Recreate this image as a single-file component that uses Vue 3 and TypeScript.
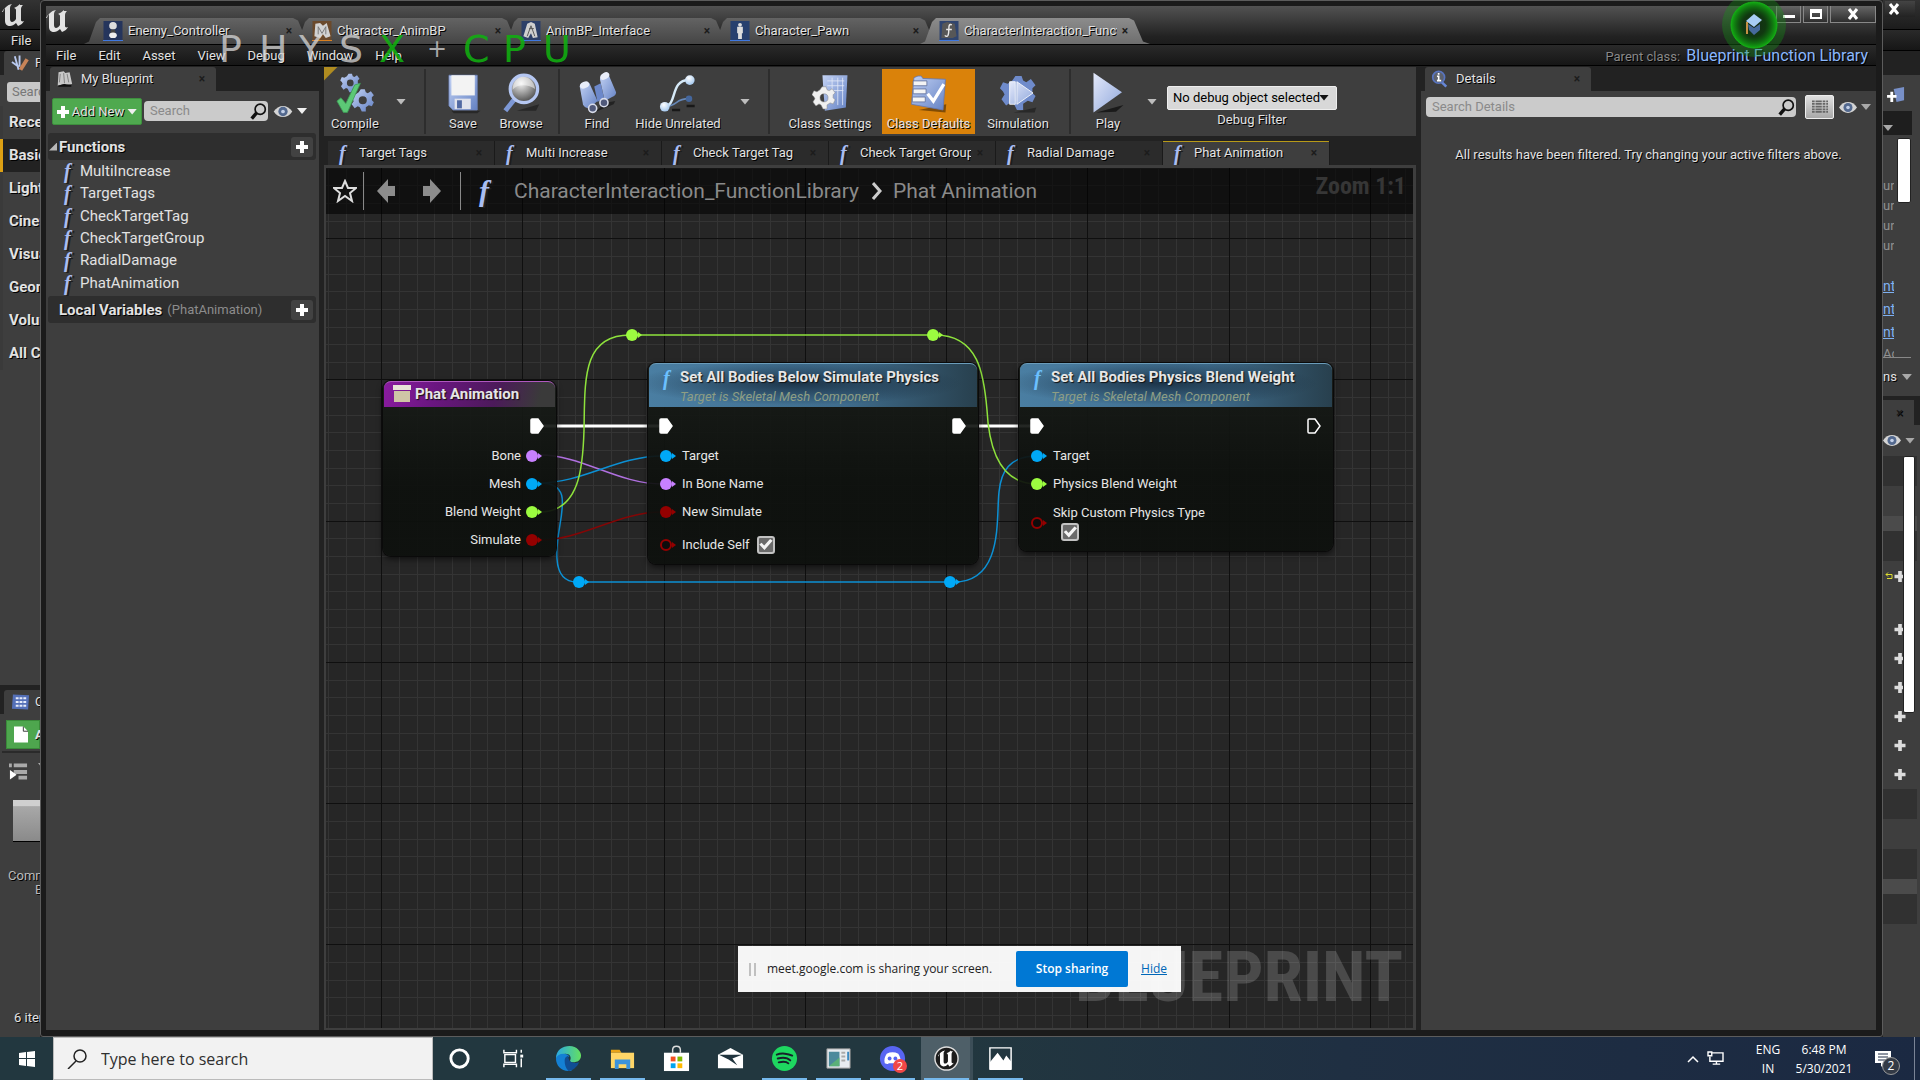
<script setup lang="ts">
import { ref } from 'vue'

interface Pin {
  label: string
  color: string
  hollow?: boolean
  check?: boolean
  stacked?: boolean
}
interface GraphNode {
  id: string
  title: string
  subtitle?: string
  kind: 'entry' | 'call'
  x: number
  y: number
  w: number
  h: number
  execIn: boolean
  execOut: 'linked' | 'open'
  pins: Pin[]
}

const docTabs = [
  { name: 'Enemy_Controller', icon: 'pawn', line: '#3f78e0' },
  { name: 'Character_AnimBP', icon: 'anim', line: '#d98020' },
  { name: 'AnimBP_Interface', icon: 'iface', line: '#3f78e0' },
  { name: 'Character_Pawn', icon: 'person', line: '#3f78e0' },
  { name: 'CharacterInteraction_FunctionLibrary', icon: 'lib', line: '#3f78e0' },
]
const menus = ['File', 'Edit', 'Asset', 'View', 'Debug', 'Window', 'Help']
const functions = ['MultiIncrease', 'TargetTags', 'CheckTargetTag', 'CheckTargetGroup', 'RadialDamage', 'PhatAnimation']
const graphTabs = ['Target Tags', 'Multi Increase', 'Check Target Tag', 'Check Target Group', 'Radial Damage', 'Phat Animation']
const categories = ['Recently Placed', 'Basic', 'Lights', 'Cinematic', 'Visual Effects', 'Geometry', 'Volumes', 'All Classes']
const physx = [...'PHYSX'].map((c, i) => ({ c, green: i === 4 }))

const purple = '#c880ff'
const blue = '#00a8f6'
const green = '#9cfc40'
const red = '#940000'

const nodes: GraphNode[] = [
  {
    id: 'entry', title: 'Phat Animation', kind: 'entry', x: 57, y: 213, w: 173, h: 175,
    execIn: false, execOut: 'linked',
    pins: [
      { label: 'Bone', color: purple },
      { label: 'Mesh', color: blue },
      { label: 'Blend Weight', color: green },
      { label: 'Simulate', color: red },
    ],
  },
  {
    id: 'simulate', title: 'Set All Bodies Below Simulate Physics', subtitle: 'Target is Skeletal Mesh Component',
    kind: 'call', x: 322, y: 195, w: 330, h: 201, execIn: true, execOut: 'linked',
    pins: [
      { label: 'Target', color: blue },
      { label: 'In Bone Name', color: purple },
      { label: 'New Simulate', color: red },
      { label: 'Include Self', color: red, hollow: true, check: true },
    ],
  },
  {
    id: 'blend', title: 'Set All Bodies Physics Blend Weight', subtitle: 'Target is Skeletal Mesh Component',
    kind: 'call', x: 693, y: 195, w: 314, h: 188, execIn: true, execOut: 'open',
    pins: [
      { label: 'Target', color: blue },
      { label: 'Physics Blend Weight', color: green },
      { label: 'Skip Custom Physics Type', color: red, hollow: true, check: true, stacked: true },
    ],
  },
]

const knots = [
  { x: 306, y: 167, color: green },
  { x: 607, y: 167, color: green },
  { x: 253, y: 414, color: blue },
  { x: 624, y: 414, color: blue },
]

const step = 17.656
const lines = (origin: number, count: number) =>
  Array.from({ length: count }, (_, i) => ({ at: Math.round(origin + i * step), major: i % 8 === 0 }))
const columns = lines(-86, 180)
const rows = lines(-71, 100)

const tasks = [
  { id: 'cortana', label: 'Cortana', open: false },
  { id: 'taskview', label: 'Task View', open: false },
  { id: 'edge', label: 'Microsoft Edge', open: true },
  { id: 'explorer', label: 'File Explorer', open: true },
  { id: 'store', label: 'Microsoft Store', open: false },
  { id: 'mail', label: 'Mail', open: false },
  { id: 'spotify', label: 'Spotify', open: true },
  { id: 'panel', label: 'Control Panel', open: true },
  { id: 'discord', label: 'Discord', open: true },
  { id: 'unreal', label: 'Unreal Editor', open: true },
  { id: 'photos', label: 'Photos', open: true },
]

const search = ref('')
const detailSearch = ref('')
const debugObject = ref('none')
</script>

<template>
  <svg class="defs" aria-hidden="true">
    <defs>
      <linearGradient id="gBlue" x1="0" y1="0" x2="1" y2="1">
        <stop offset="0" stop-color="#c3d2f4" />
        <stop offset="1" stop-color="#6482c4" />
      </linearGradient>
      <linearGradient id="gPlay" x1="0" y1="0" x2="1" y2="1">
        <stop offset="0" stop-color="#e4e9fa" />
        <stop offset="1" stop-color="#90a8dc" />
      </linearGradient>
      <radialGradient id="gLens" cx=".4" cy=".3" r=".7">
        <stop offset="0" stop-color="#f2f2f2" />
        <stop offset="1" stop-color="#4c4c4c" />
      </radialGradient>
      <radialGradient id="gBall" cx=".4" cy=".3" r=".7">
        <stop offset="0" stop-color="#ffffff" />
        <stop offset="1" stop-color="#a4c8ee" />
      </radialGradient>
      <radialGradient id="gRing">
        <stop offset="0" stop-color="#20a020" stop-opacity="0" />
        <stop offset=".5" stop-color="#0c700c" stop-opacity=".3" />
        <stop offset="1" stop-color="#12b412" stop-opacity=".95" />
      </radialGradient>
      <linearGradient id="gEdge" x1="0" y1="0" x2="1" y2="0">
        <stop offset="0" stop-color="#2aa8e4" />
        <stop offset="1" stop-color="#64e060" />
      </linearGradient>
    </defs>
    <symbol id="i-ue" viewBox="0 0 24 24">
      <path d="M1 9C2 5 5 2 10 1 8 3 8 4 8 6v10c0 2 1 3 2 3s3-1 4-3V7c0-1-1-2-2-2 2-1 4-2 6-4v1h3c-1 1-2 2-2 4v11c0 1 1 2 3 1-1 2-3 4-6 5l-2-3c-2 2-4 3-6 3-3 0-5-2-5-5V7c0-2-1-2-3 2z" fill="currentColor" />
    </symbol>
    <symbol id="i-gear" viewBox="0 0 24 24">
      <path fill-rule="evenodd" d="M10 1h4l1 3 2 1 3-2 3 4-2 2v3l2 2-2 4-3-1-3 2v4h-4l-2-4-2-1-3 2-3-4 2-3-1-2-2-2 2-4 3 1 3-2zM12 8a4 4 0 1 0 0 8 4 4 0 1 0 0-8z" />
    </symbol>
    <symbol id="i-mag" viewBox="0 0 20 20">
      <circle cx="12" cy="8" r="6" fill="none" stroke="#111" stroke-width="2" />
      <path d="M8 12l-6 7" stroke="#111" stroke-width="4" />
    </symbol>
    <symbol id="i-eye" viewBox="0 0 20 14">
      <path d="M0 7C5-1 15-1 20 7c-5 8-15 8-20 0z" fill="#d4d4d4" />
      <circle cx="10" cy="7" r="5" fill="#53698f" />
      <circle cx="10" cy="7" r="2" fill="#c3d0e8" />
    </symbol>
    <symbol id="i-exec" viewBox="0 0 14 16">
      <path d="M2 1h6l5 7-5 7H2c-1 0-1-1-1-1V2c0-1 1-1 1-1z" stroke="#fff" stroke-width="1.5" />
    </symbol>
    <symbol id="i-compile" viewBox="0 0 48 52">
      <use href="#i-gear" x="5" y="1" width="25" height="25" fill="url(#gBlue)" />
      <use href="#i-gear" x="18" y="19" width="30" height="32" fill="url(#gBlue)" />
      <path d="M1 36l5-4 6 7L23 16l7-2L14 50H9z" fill="#5cc876" stroke="#3c9c54" />
    </symbol>
    <symbol id="i-save" viewBox="0 0 48 52">
      <path d="M9 48h36l-4 3H12z" fill="#111" opacity=".5" />
      <path d="M6 4h35v43H11l-5-5z" fill="url(#gBlue)" stroke="#6d84bb" />
      <path d="M9 4h29v25H9z" fill="#f3f3f3" />
      <path d="M13 33h20v13H13z" fill="#e1e3ec" />
      <path d="M16 35h6v10h-6z" fill="#5169a2" />
    </symbol>
    <symbol id="i-browse" viewBox="0 0 48 52">
      <path d="M18 48h24l4-8z" fill="#111" opacity=".5" />
      <path d="M15 34L4 48" stroke="#7d98d6" stroke-width="6" />
      <circle cx="27" cy="21" r="17" fill="url(#gLens)" stroke="#b5c7f2" stroke-width="4" />
      <path d="M13 22c6-8 20-7 28-1-2-10-8-15-15-15S13 13 13 22z" fill="#fff" opacity=".5" />
    </symbol>
    <symbol id="i-find" viewBox="0 0 48 52">
      <path d="M20 50l24-10 2-4-12 2z" fill="#111" opacity=".6" />
      <path d="M20 18l8-4 4 18-8 5z" fill="#6c88ca" />
      <path d="M2 18c2-5 9-7 12-4l10 22-10 9c-4 0-7-2-8-5z" fill="url(#gBlue)" />
      <path d="M27 9c1-6 8-9 11-5l9 21c0 3-2 5-5 6l-9 5z" fill="url(#gBlue)" />
      <ellipse cx="8" cy="16" rx="6" ry="4" fill="#e8edf9" transform="rotate(-25 8 16)" />
      <ellipse cx="33" cy="5" rx="6" ry="4" fill="#e8edf9" transform="rotate(-30 33 5)" />
      <circle cx="18" cy="45" r="5" fill="#50597a" stroke="#d8dcea" stroke-width="2" />
      <circle cx="32" cy="38" r="5" fill="#50597a" stroke="#d8dcea" stroke-width="2" />
    </symbol>
    <symbol id="i-hide" viewBox="0 0 48 52">
      <path d="M7 43c17-1 12-10 30-10" fill="none" stroke="#6688b8" stroke-width="2" />
      <path d="M7 43C23 41 13 10 37 10" fill="none" stroke="#d6eaf8" stroke-width="3" />
      <circle cx="7" cy="43" r="6" fill="url(#gBall)" />
      <circle cx="38" cy="10" r="6" fill="url(#gBall)" />
      <circle cx="37" cy="33" r="4" fill="#44669c" />
      <path d="M16 47h10M34 42h10" stroke="#181818" stroke-width="3" />
    </symbol>
    <symbol id="i-settings" viewBox="0 0 48 52">
      <path d="M14 4h31l-2 40-26 4z" fill="url(#gBlue)" />
      <path d="M20 11h21M20 17h21M20 23h20M26 7v22M33 7v34M39 7v34" stroke="#e2e8f8" stroke-width="1" />
      <use href="#i-gear" x="1" y="14" width="30" height="36" fill="#f0f0f0" stroke="#888" stroke-width=".5" />
    </symbol>
    <symbol id="i-defaults" viewBox="0 0 48 52">
      <path d="M12 47l33 3 1-10z" fill="#442800" opacity=".6" />
      <path d="M6 7l5-2h4l2 3 28 1-3 38L3 40z" fill="url(#gBlue)" stroke="#6378b2" />
      <path d="M5 11h17v6H5zM5 21h16v6H5zM4 31h16v6H4z" fill="#f4f4f4" stroke="#5f6f9a" />
      <path d="M23 27l7 9L43 15" fill="none" stroke="#fff" stroke-width="4" />
    </symbol>
    <symbol id="i-sim" viewBox="0 0 48 52">
      <path d="M18 50h26l2-6z" fill="#111" opacity=".5" />
      <use href="#i-gear" x="1" y="1" width="46" height="50" fill="#6f8bcb" />
      <circle cx="24" cy="26" r="11" fill="#7d97d2" />
      <path d="M13 12h7v28h-7zM22 12l20 14-20 14z" fill="url(#gPlay)" stroke="#fff" />
    </symbol>
    <symbol id="i-play" viewBox="0 0 48 56">
      <path d="M8 54l36-10-10 9z" fill="#111" opacity=".8" />
      <path d="M4 1l38 26L4 54z" fill="url(#gPlay)" />
    </symbol>
    <symbol id="i-pawn" viewBox="0 0 20 20">
      <path d="M0 0h20v20H0z" fill="#25355c" />
      <circle cx="10" cy="5" r="4" fill="#ddd" /><path d="M8 9h4l1 4H7z" fill="#444" />
      <ellipse cx="10" cy="15" rx="4" ry="3" fill="#eee" />
    </symbol>
    <symbol id="i-anim" viewBox="0 0 20 20">
      <path d="M0 0h20v20H0z" fill="#6b4a2c" />
      <path d="M3 3l5-1 3 3 4-3 4 14-5 2-3-4-3 4-6-2z" fill="#d2d2d2" /><path d="M6 14V6l4 7 4-7v8" fill="none" stroke="#777" />
    </symbol>
    <symbol id="i-iface" viewBox="0 0 20 20">
      <path d="M0 0h20v20H0z" fill="#2c3f68" />
      <path d="M6 3l4-2 4 2 3 14-5 1-2-5-3 5-5-2z" fill="#cfcfcf" /><path d="M6 16l4-11 4 11M8 8h5" fill="none" stroke="#555" />
    </symbol>
    <symbol id="i-person" viewBox="0 0 20 20">
      <path d="M0 0h20v20H0z" fill="#27406e" />
      <circle cx="10" cy="4" r="2" fill="#ddd" /><path d="M7 6h6v7h-1v6H8v-6H7z" fill="#ddd" />
    </symbol>
    <symbol id="i-lib" viewBox="0 0 20 20">
      <path d="M0 0h20v20H0z" fill="#30456f" />
      <path d="M3 3l5-2 8 2 2 13-4 2H2z" fill="#575757" /><path d="M13 4c-5-2-2 6-4 11-1 2-3 1-3 0M7 9h6" fill="none" stroke="#e8e8e8" stroke-width="1.5" />
    </symbol>
    <symbol id="i-book" viewBox="0 0 20 20">
      <path d="M3 2l6-1 2 2 5-1 3 14-7 1-3-1-7 2z" fill="#c8c8c8" /><path d="M9 3l1 12M5 4l-1 10M13 4l2 10" stroke="#777" />
      <path d="M2 18l8-2 8 1v2H3z" fill="#111" />
    </symbol>
    <symbol id="i-info" viewBox="0 0 20 20">
      <path d="M12 13l6 6" stroke="#6787d6" stroke-width="3" />
      <circle cx="9" cy="8" r="7" fill="#5d626e" stroke="#5874bf" stroke-width="2" />
      <path d="M9 3v2M7 7h2v5M7 12h5" stroke="#fff" stroke-width="2" />
    </symbol>
    <symbol id="t-cortana" viewBox="0 0 28 28"><circle cx="13" cy="14" r="9" fill="none" stroke="#fff" stroke-width="3" /></symbol>
    <symbol id="t-taskview" viewBox="0 0 28 28">
      <path d="M3 5v3h13V5M3 23v-3h13v3M4 10h11v8H4zM21 5v3M21 14v9" fill="none" stroke="#fff" stroke-width="1.5" /><path d="M20 10h3v3h-3z" fill="#fff" />
    </symbol>
    <symbol id="t-edge" viewBox="0 0 28 28">
      <path d="M1 14C1 5 8 1 15 1c8 0 12 6 12 10 0 5-4 7-8 7-3 0-4-1-3-3 1-3-1-6-5-6-5 0-8 3-10 5z" fill="url(#gEdge)" />
      <path d="M1 14c1-3 4-5 8-5 3 0 5 1 6 3-4 1-6 10 2 14 1 1-1 1-3 1C6 27 1 21 1 14z" fill="#1480d4" />
      <path d="M10 16c0-2 1-4 4-5-1 6 4 9 11 7-2 5-7 9-11 9-3-3-4-7-4-11z" fill="#104e94" />
    </symbol>
    <symbol id="t-explorer" viewBox="0 0 28 28">
      <path d="M2 5h9l2 3H2z" fill="#e8a317" /><path d="M2 8h24v16H2z" fill="#ffd667" />
      <path d="M6 15h16v10h-4v-5h-8v5H6z" fill="#3c93dc" />
    </symbol>
    <symbol id="t-store" viewBox="0 0 28 28">
      <path d="M10 8V5c0-5 8-5 8 0v3" fill="none" stroke="#ddd" stroke-width="1.5" /><path d="M1 8h26v19H1z" fill="#fff" />
      <path d="M8 12h5v5H8z" fill="#f25022" /><path d="M15 12h5v5h-5z" fill="#7fba00" /><path d="M8 19h5v5H8z" fill="#00a4ef" /><path d="M15 19h5v5h-5z" fill="#ffb900" />
    </symbol>
    <symbol id="t-mail" viewBox="0 0 28 28">
      <path d="M1 10l13-7 13 7v14H1z" fill="#fff" /><path d="M2 10h24l-10 4 5 7-9-6z" fill="#20343e" />
    </symbol>
    <symbol id="t-spotify" viewBox="0 0 28 28">
      <circle cx="14" cy="14" r="13" fill="#1ed760" /><path d="M6 10c5-2 12-1 16 1M7 14c4-1 10-1 13 2M8 18c4-1 8-1 10 1" fill="none" stroke="#18202a" stroke-width="2" stroke-linecap="round" />
    </symbol>
    <symbol id="t-panel" viewBox="0 0 28 28">
      <path d="M2 4h24v20H2z" fill="#e8ecf0" stroke="#999" /><path d="M4 7h11v15H4z" fill="#4c8a9c" /><path d="M4 22l11-9v9z" fill="#5bb078" />
      <path d="M17 8h4M17 12h4M17 16h4" stroke="#aaa" stroke-width="2" /><path d="M23 7h2v9h-2z" fill="#3c8ac0" />
    </symbol>
    <symbol id="t-discord" viewBox="0 0 28 28">
      <circle cx="14" cy="14" r="13" fill="#5865f2" />
      <path d="M8 9c4-2 8-2 12 0 2 3 3 6 2 10-2 1-4 1-4 0H10c0 1-2 1-4 0-1-4 0-7 2-10z" fill="#fff" /><circle cx="11" cy="14" r="2" fill="#5865f2" /><circle cx="17" cy="14" r="2" fill="#5865f2" />
    </symbol>
    <symbol id="t-unreal" viewBox="0 0 28 28">
      <circle cx="14" cy="14" r="12" fill="#1c1c1c" stroke="#ddd" stroke-width="1.5" /><use href="#i-ue" x="5" y="5" width="18" height="18" color="#fff" />
    </symbol>
    <symbol id="t-photos" viewBox="0 0 28 28">
      <path d="M3 3h22v22H3z" fill="none" stroke="#fff" stroke-width="1.5" /><path d="M3 18l8-10 6 8 3-5 5 6v9H3z" fill="#fff" />
    </symbol>
  </svg>

  <div class="screen">
    <div class="desktop">
      <!-- Level editor: part visible left of the blueprint window -->
      <aside class="back left">
        <div class="bk-title"><svg class="ue"><use href="#i-ue" /></svg></div>
        <div class="bk-menu">File</div>
        <div class="bk-strip">
          <div class="bk-tab">
            <svg viewBox="0 0 20 18"><path d="M4 2l4 14M9 1v12M1 8l7 5" stroke="#b8c8ee" stroke-width="2" /><path d="M17 5l-7 11" stroke="#c88458" stroke-width="4" /></svg>
            <span>Place Actors</span>
          </div>
        </div>
        <div class="bk-search">Search Classes</div>
        <ul class="cats">
          <li v-for="c in categories" :key="c" :class="{ on: c === 'Basic' }">{{ c }}</li>
        </ul>
        <div class="bk-browser">
          <div class="bk-strip low">
            <div class="bk-tab">
              <svg viewBox="0 0 20 18"><path d="M2 1l17 1-1 15-17-1z" fill="#5470b8" /><path d="M5 5h12M5 9h12M5 13h11" stroke="#e6ecfa" stroke-width="2" stroke-dasharray="3 1" /></svg>
              <span>Content</span>
            </div>
          </div>
          <div class="bk-add"><svg viewBox="0 0 15 17"><path d="M0 0h10l5 5v12H0z" fill="#fff" /><path d="M10 0v5h5" fill="none" stroke="#333" /></svg>Add</div>
          <div class="bk-tree"><svg viewBox="0 0 20 18"><path d="M0 2h3M5 2h14M5 9h14M10 15h9" stroke="#aaa" stroke-width="4" /><path d="M1 7l7 5-7 5z" fill="#fff" /></svg><i class="tri dim"></i></div>
          <div class="bk-folder"></div>
          <div class="bk-fname">Common<br /><span>Blueprints</span></div>
          <div class="bk-count">6 items</div>
        </div>
      </aside>

      <!-- Blueprint window -->
      <main class="win">
        <header class="titlebar">
          <svg class="ue"><use href="#i-ue" /></svg>
          <nav class="doctabs">
            <button v-for="(t, i) in docTabs" :key="t.name" class="doctab" :class="{ active: i === 4 }">
              <svg class="doc-ico" :style="{ borderBottomColor: t.line }"><use :href="'#i-' + t.icon" /></svg>
              <span class="doc-name">{{ t.name }}</span>
              <span class="x">×</span>
            </button>
          </nav>
          <div class="winbtns">
            <button aria-label="Minimize"><svg viewBox="0 0 12 12"><path d="M0 7h12v3H0z" fill="#fff" /></svg></button>
            <button aria-label="Maximize"><svg viewBox="0 0 12 12"><path d="M1 4V2h10v8H1V4h10" fill="none" stroke="#fff" stroke-width="2" /></svg></button>
            <button class="close" aria-label="Close"><svg viewBox="0 0 12 12"><path d="M2 1l8 10M10 1L2 11" stroke="#fff" stroke-width="3" /></svg></button>
          </div>
          <svg class="tutorial" viewBox="0 0 68 68">
            <circle cx="34" cy="34" r="32" fill="#149414" opacity=".35" />
            <circle cx="34" cy="34" r="23" fill="#122012" />
            <circle cx="34" cy="34" r="23" fill="url(#gRing)" stroke="#16b016" />
            <path d="M28 33l6 4 6-4v6l-6 5-5-5z" fill="#466a9c" />
            <path d="M34 23l8 6-8 7-8-6z" fill="#a8cdf4" />
            <path d="M27 31v12" stroke="#c49044" stroke-width="2" />
          </svg>
        </header>

        <div class="menubar">
          <nav><button v-for="m in menus" :key="m">{{ m }}</button></nav>
          <div class="parent">Parent class: <a href="#">Blueprint Function Library</a></div>
        </div>

        <div class="physx">
          <span v-for="p in physx" :key="p.c" :class="{ green: p.green }">{{ p.c }}</span>
          <span class="plus-sign">+</span>
          <span class="green">C</span><span class="green">P</span><span class="green">U</span>
        </div>

        <div class="dock">
          <section class="pane">
            <div class="strip">
              <div class="ptab"><svg class="ico20"><use href="#i-book" /></svg><span>My Blueprint</span><span class="x">×</span></div>
            </div>
            <div class="panel">
              <div class="bp-tools">
                <button class="addnew"><svg viewBox="0 0 12 12"><path d="M4 0h4v4h4v4H8v4H4V8H0V4h4z" fill="#fff" /></svg>Add New<i class="tri"></i></button>
                <label class="search"><input v-model="search" type="text" placeholder="Search" aria-label="Search" /><svg><use href="#i-mag" /></svg></label>
                <button class="eye" aria-label="View options"><svg><use href="#i-eye" /></svg><i class="tri"></i></button>
              </div>
              <div class="sect"><i class="arrow"></i><b>Functions</b><button aria-label="Add function"><svg viewBox="0 0 12 12"><path d="M4 0h4v4h4v4H8v4H4V8H0V4h4z" fill="#fff" /></svg></button></div>
              <ul class="fns">
                <li v-for="f in functions" :key="f"><i class="fn">f</i>{{ f }}</li>
              </ul>
              <div class="sect"><i class="arrow none"></i><b>Local Variables</b><small>(PhatAnimation)</small><button aria-label="Add local variable"><svg viewBox="0 0 12 12"><path d="M4 0h4v4h4v4H8v4H4V8H0V4h4z" fill="#fff" /></svg></button></div>
            </div>
          </section>

          <section class="center">
            <div class="toolbar">
              <button class="tool w62"><svg class="tico"><use href="#i-compile" /></svg>Compile</button>
              <i class="tri drop"></i>
              <i class="sep"></i>
              <button class="tool w58"><svg class="tico"><use href="#i-save" /></svg>Save</button>
              <button class="tool w58"><svg class="tico"><use href="#i-browse" /></svg>Browse</button>
              <i class="sep"></i>
              <button class="tool w58"><svg class="tico"><use href="#i-find" /></svg>Find</button>
              <button class="tool w104"><svg class="tico"><use href="#i-hide" /></svg>Hide Unrelated</button>
              <i class="tri drop"></i>
              <i class="sep"></i>
              <button class="tool w104"><svg class="tico"><use href="#i-settings" /></svg>Class Settings</button>
              <button class="tool on w93"><svg class="tico"><use href="#i-defaults" /></svg>Class Defaults</button>
              <button class="tool w86"><svg class="tico"><use href="#i-sim" /></svg>Simulation</button>
              <i class="sep"></i>
              <button class="tool w58"><svg class="tico"><use href="#i-play" /></svg>Play</button>
              <i class="tri drop"></i>
              <div class="debug">
                <span class="selwrap">
                  <select id="dbg" v-model="debugObject"><option value="none">No debug object selected</option></select><i class="tri"></i>
                </span>
                <label for="dbg">Debug Filter</label>
              </div>
            </div>

            <div class="gtabs">
              <button v-for="(g, i) in graphTabs" :key="g" class="gtab" :class="{ active: i === 5 }">
                <i class="fn">f</i><span class="gname">{{ g }}</span><span class="x">×</span>
              </button>
            </div>

            <div class="graph">
              <svg class="grid" aria-hidden="true">
                <g shape-rendering="crispEdges" fill="#343434">
                  <template v-for="c in columns" :key="'c' + c.at"><rect v-if="!c.major" :x="c.at" y="0" width="1" height="100%" /></template>
                  <template v-for="r in rows" :key="'r' + r.at"><rect v-if="!r.major" x="0" :y="r.at" width="100%" height="1" /></template>
                </g>
                <g shape-rendering="crispEdges" fill="#0f0f0f">
                  <template v-for="c in columns" :key="'C' + c.at"><rect v-if="c.major" :x="c.at" y="0" width="1" height="100%" /></template>
                  <template v-for="r in rows" :key="'R' + r.at"><rect v-if="r.major" x="0" :y="r.at" width="100%" height="1" /></template>
                </g>
              </svg>
              <div class="watermark">BLUEPRINT</div>

              <svg class="wires" aria-hidden="true">
                <g transform="translate(-326 -168)" fill="none" stroke-width="1.5">
                  <path d="M540 426H662M962 426h70" stroke="#fff" stroke-width="3" />
                  <path d="M540 455c42 0 78 29 122 29" stroke="#b070e0" />
                  <path d="M540 483c42 0 78-27 122-27M540 483c40 0 14 41 17 76 1 15 8 23 20 23H954c50 0 42-65 45-90 2-20 10-36 38-36" stroke="#0c90d4" />
                  <path d="M540 540c42 0 78-28 122-28" stroke="#840606" />
                  <path d="M540 512c40 0 43-46 44-82 1-50-2-95 46-95H935c44 0 49 40 52 75 2 40 14 74 50 74" stroke="#8ee23c" />
                </g>
              </svg>

              <article v-for="n in nodes" :key="n.id" class="node" :class="n.kind" :style="{ left: n.x + 'px', top: n.y + 'px', width: n.w + 'px', height: n.h + 'px' }">
                <header>
                  <svg v-if="n.kind === 'entry'" viewBox="0 0 18 17"><path d="M0 0h18v5H0z" fill="#e8e4d8" /><path d="M1 6h16v11H1z" fill="#cfc5a6" /></svg>
                  <i v-else class="fn">f</i>
                  <div><h3>{{ n.title }}</h3><p v-if="n.subtitle">{{ n.subtitle }}</p></div>
                </header>
                <div class="exec">
                  <svg v-if="n.execIn" fill="#fff"><use href="#i-exec" /></svg>
                  <svg class="out" :fill="n.execOut === 'linked' ? '#fff' : 'none'"><use href="#i-exec" /></svg>
                </div>
                <div v-for="p in n.pins" :key="p.label" class="pin" :class="{ tall: p.stacked, mid: p.check && !p.stacked }">
                  <svg viewBox="0 0 16 14"><circle cx="6" cy="7" :r="p.hollow ? 5 : 6" :fill="p.hollow ? '#0c0c0c' : p.color" :stroke="p.color" :stroke-width="p.hollow ? 2 : 0" /><path d="M12 4l4 3-4 3z" :fill="p.color" /></svg>
                  <label v-if="p.check" :class="{ stacked: p.stacked }">{{ p.label }}<input type="checkbox" checked /></label>
                  <span v-else>{{ p.label }}</span>
                </div>
              </article>

              <svg v-for="(k, i) in knots" :key="i" class="knot" viewBox="0 0 16 14" :style="{ left: k.x - 6 + 'px', top: k.y - 7 + 'px' }"><circle cx="6" cy="7" r="6" :fill="k.color" /><path d="M12 4l4 3-4 3z" :fill="k.color" /></svg>

              <div class="crumbs">
                <svg class="star" viewBox="0 0 24 24"><path d="M12 2l3 7h8l-6 5 2 8-7-5-7 5 2-8-6-5h8z" fill="none" stroke="#ddd" stroke-width="2" /></svg>
                <i class="vline"></i>
                <svg class="arr" viewBox="0 0 20 26"><path d="M1 13L12 1v7h7v10h-7v7z" fill="#8c8c8c" /></svg>
                <svg class="arr" viewBox="0 0 20 26"><path d="M19 13L8 1v7H1v10h7v7z" fill="#8c8c8c" /></svg>
                <i class="vline"></i>
                <i class="fn big">f</i>
                <span>CharacterInteraction_FunctionLibrary</span>
                <svg class="chev" viewBox="0 0 10 18"><path d="M1 1l7 8-7 8" fill="none" stroke="#ccc" stroke-width="3" /></svg>
                <span>Phat Animation</span>
                <b>Zoom 1:1</b>
              </div>
            </div>
          </section>

          <section class="pane">
            <div class="strip">
              <div class="ptab right"><svg class="ico20"><use href="#i-info" /></svg><span>Details</span><span class="x">×</span></div>
            </div>
            <div class="panel">
              <div class="dt-tools">
                <label class="search"><input v-model="detailSearch" type="text" placeholder="Search Details" aria-label="Search Details" /><svg><use href="#i-mag" /></svg></label>
                <button class="matrix" aria-label="Property matrix"><svg viewBox="0 0 18 16"><path d="M0 1h18M0 4h18M0 7h18M0 10h18M0 13h18" stroke="#666" stroke-width="2" stroke-dasharray="3 1 7 1" /></svg></button>
                <button class="eye" aria-label="View options"><svg><use href="#i-eye" /></svg><i class="tri dim"></i></button>
              </div>
              <p class="empty">All results have been filtered. Try changing your active filters above.</p>
            </div>
          </section>
        </div>
      </main>

      <!-- Level editor: part visible right of the blueprint window -->
      <aside class="back right">
        <div class="bk-title"><button aria-label="Close editor"><svg viewBox="0 0 12 12"><path d="M2 1l8 10M10 1L2 11" stroke="#fff" stroke-width="3" /></svg></button></div>
        <div class="bk-menu"></div>
        <div class="bk-strip"></div>
        <div class="r-tool"><svg viewBox="0 0 20 18"><path d="M7 2l11-2v14l-8 2z" fill="#7890c8" /><path d="M0 10h10M5 5v11" stroke="#fff" stroke-width="3" /></svg></div>
        <div class="r-head"><i class="tri dim"></i></div>
        <div class="r-list">
          <div class="r-text">
            <span>ur</span><span>ur</span><span>ur</span><span>ur</span>
            <a href="#">nt</a><a href="#">nt</a><a href="#">nt</a><span>Ac</span>
          </div>
          <i class="thumb"></i>
        </div>
        <div class="r-foot">ns <i class="tri dim"></i></div>
        <div class="r-strip"><div>×</div></div>
        <div class="r-eye"><svg><use href="#i-eye" /></svg><i class="tri dim"></i></div>
        <div class="r-props">
          <div class="r-bands"><i class="b1"></i><i class="b2"></i><i class="b3"></i><i class="b4"></i></div>
          <div class="r-plus first"><svg viewBox="0 0 9 8"><path d="M1 2h6v4H2M3 0L1 2l2 2" fill="none" stroke="#dede30" /></svg><svg viewBox="0 0 12 12"><path d="M4 0h4v4h4v4H8v4H4V8H0V4h4z" fill="#ddd" /></svg></div>
          <div v-for="k in 6" :key="k" class="r-plus"><svg viewBox="0 0 12 12"><path d="M4 0h4v4h4v4H8v4H4V8H0V4h4z" fill="#ddd" /></svg></div>
          <div class="r-bands"><i class="b1"></i><i class="b2"></i><i class="b1"></i><i class="b3"></i><i class="b1"></i></div>
          <i class="thumb"></i>
        </div>
      </aside>

      <div class="share">
        <i class="grip"></i>
        <span>meet.google.com is sharing your screen.</span>
        <button>Stop sharing</button>
        <a href="#">Hide</a>
      </div>
    </div>

    <footer class="taskbar">
      <button class="start" aria-label="Start"><svg viewBox="0 0 16 16"><path d="M0 2l7-1v6H0zM8 1l8-1v7H8zM0 8h7v7l-7-1zM8 8h8v8l-8-1z" fill="#fff" /></svg></button>
      <label class="tsearch">
        <svg viewBox="0 0 20 20"><circle cx="13" cy="7" r="6" fill="none" stroke="#222" stroke-width="1.5" /><path d="M9 12l-8 8" stroke="#222" stroke-width="1.5" /></svg>
        <input type="text" placeholder="Type here to search" aria-label="Type here to search" />
      </label>
      <button v-for="t in tasks" :key="t.id" class="task" :class="{ open: t.open, current: t.id === 'unreal' }" :aria-label="t.label">
        <svg><use :href="'#t-' + t.id" /></svg>
        <span v-if="t.id === 'discord'" class="count">2</span>
      </button>
      <div class="tray">
        <svg class="up" viewBox="0 0 12 8"><path d="M1 7l5-5 5 5" fill="none" stroke="#fff" stroke-width="1.5" /></svg>
        <svg class="net" viewBox="0 0 18 16"><path d="M5 2h12v9H3V6M10 11v3M6 14h8M1 1h4v4H1z" fill="none" stroke="#fff" stroke-width="1.5" /></svg>
        <div class="two lang"><span>ENG</span><span>IN</span></div>
        <div class="two clock"><span>6:48 PM</span><span>5/30/2021</span></div>
        <div class="notif"><svg viewBox="0 0 16 16"><path d="M0 0h16v12h-7l-3 4v-4H0z" fill="#fff" /><path d="M3 3h10M3 6h10M3 9h10" stroke="#1c2a44" /></svg><span>2</span></div>
        <i class="peek"></i>
      </div>
    </footer>
  </div>
</template>

<style>
body {
  margin: 0;
  background: #222;
}
</style>

<style scoped>
* {
  box-sizing: border-box;
}
button {
  border: 0;
  padding: 0;
  margin: 0;
  background: none;
  color: inherit;
  font: inherit;
  text-shadow: inherit;
}
ul,
h3,
p {
  list-style: none;
  margin: 0;
  padding: 0;
}
svg {
  flex: none;
  display: block;
}
.defs {
  position: absolute;
  width: 0;
  height: 0;
}
.screen {
  height: 100vh;
  display: flex;
  flex-direction: column;
  overflow: hidden;
  font: 13px/16px Roboto, sans-serif;
  color: #e2e2e2;
  text-shadow: 1px 1px 0 #000;
}
.desktop {
  position: relative;
  flex: 1;
  min-height: 0;
  display: grid;
  grid-template-columns: 40px minmax(0, 1fr) 37px;
  grid-template-rows: minmax(0, 1fr);
}
.x {
  color: #1c1c1c;
  font-size: 12px;
  font-weight: bold;
  text-shadow: none;
}
.tri {
  flex: none;
  width: 10px;
  height: 6px;
  background: #f0f0f0;
  clip-path: polygon(0 0, 100% 0, 50% 100%);
}
.tri.dim {
  background: #a8a8a8;
}
.fn {
  font: italic bold 20px/20px "Liberation Serif", serif;
  color: #a9bdf2;
  text-shadow: 2px 1px 0 #1d1d1d;
}

/* level editor slivers */
.back {
  background: #3e3e3e;
  overflow: hidden;
  white-space: nowrap;
  display: flex;
  flex-direction: column;
}
.bk-title {
  flex: none;
  height: 29px;
  background: linear-gradient(#333, #1c1c1c);
  padding: 3px 2px;
}
.bk-title .ue {
  width: 24px;
  height: 24px;
  color: #ddd;
}
.right .bk-title {
  padding-top: 1px;
}
.bk-title button {
  width: 30px;
  height: 16px;
  background: linear-gradient(#444, #222);
  padding-left: 3px;
}
.bk-title button svg {
  width: 12px;
  height: 12px;
}
.bk-menu {
  flex: none;
  height: 22px;
  border: solid #000;
  border-width: 1px 0;
  background: linear-gradient(#2a2a2a, #161616);
  padding: 3px 11px;
}
.bk-strip {
  flex: none;
  height: 24px;
  background: #222;
  padding-left: 4px;
}
.bk-strip.low {
  height: 29px;
  padding-top: 5px;
}
.bk-tab {
  height: 24px;
  background: #3e3e3e;
  border-radius: 3px 0 0 0;
  display: flex;
  align-items: center;
  gap: 5px;
  padding-left: 7px;
}
.bk-tab svg {
  width: 19px;
  height: 18px;
}
.bk-search {
  flex: none;
  height: 20px;
  margin: 7px 0 4px 7px;
  background: #c8c8c8;
  border-radius: 3px 0 0 3px;
  color: #777;
  text-shadow: none;
  padding: 2px 5px;
}
.cats li {
  height: 33px;
  font: bold 15px/33px Roboto, sans-serif;
  padding-left: 6px;
  border-left: 3px solid #3a3a3a;
}
.cats li.on {
  border-color: #dca014;
  background: #222;
}
.bk-browser {
  margin-top: auto;
  height: 352px;
}
.bk-add {
  margin: 6px 0 2px 6px;
  height: 29px;
  background: #4ea64e;
  border: 1px solid #3a8a3a;
  display: flex;
  align-items: center;
  gap: 7px;
  padding-left: 7px;
  font-weight: bold;
}
.bk-add svg {
  width: 14px;
  height: 17px;
}
.bk-tree {
  border-top: 2px solid #2a2a2a;
  margin-left: 2px;
  height: 49px;
  display: flex;
  gap: 10px;
  padding: 10px 7px;
}
.bk-tree svg {
  width: 19px;
  height: 18px;
}
.bk-folder {
  margin-left: 13px;
  height: 42px;
  background: linear-gradient(#cfcfcf 15%, #a8a8a8 16%, #8a8a8a);
  border-bottom: 1px solid #000;
}
.bk-fname {
  margin: 27px 0 0 8px;
  line-height: 14px;
  color: #bbb;
}
.bk-fname span {
  padding-left: 27px;
}
.bk-count {
  margin: 113px 0 0 14px;
}
.r-tool {
  flex: none;
  height: 36px;
  padding: 12px 4px;
}
.r-tool svg {
  width: 19px;
  height: 17px;
}
.r-head {
  flex: none;
  height: 24px;
  margin-right: 8px;
  background: #1e1e1e;
  display: flex;
  align-items: end;
  padding-bottom: 4px;
}
.r-list {
  flex: none;
  height: 223px;
  margin-right: 9px;
  border-bottom: 1px solid #888;
  display: flex;
  justify-content: space-between;
  padding-top: 3px;
}
.r-text {
  width: 11px;
  overflow: hidden;
  padding-top: 38px;
  display: flex;
  flex-direction: column;
  color: #909090;
  line-height: 20px;
  text-shadow: none;
}
.r-text a {
  color: #7fb0f0;
  line-height: 23px;
  font-size: 14px;
}
.r-text a:first-of-type {
  margin-top: 19px;
}
.thumb {
  flex: none;
  width: 14px;
  height: 65px;
  background: #fff;
  border: 1px solid #222;
  border-radius: 2px;
}
.r-foot {
  flex: none;
  height: 38px;
  display: flex;
  align-items: center;
  gap: 5px;
}
.r-strip {
  flex: none;
  height: 29px;
  background: #222;
  padding: 4px 6px 0 0;
}
.r-strip div {
  height: 25px;
  background: #3e3e3e;
  padding: 5px 13px;
  color: #1c1c1c;
}
.r-eye {
  flex: none;
  height: 31px;
  display: flex;
  align-items: center;
  gap: 4px;
}
.r-eye svg {
  width: 18px;
  height: 13px;
}
.r-props {
  position: relative;
  flex: 1;
  overflow: hidden;
}
.r-props .thumb {
  position: absolute;
  left: 20px;
  top: 0;
  width: 12px;
  height: 257px;
}
.r-bands {
  margin-right: 3px;
  display: flex;
  flex-direction: column;
}
.r-bands i {
  height: 30px;
}
.r-bands .b1,
.r-bands .b4 {
  background: #313131;
}
.r-bands .b3 {
  height: 15px;
  background: #4b4b4b;
}
.r-plus {
  height: 29px;
  padding-left: 11px;
  display: flex;
  align-items: center;
}
.r-plus svg {
  width: 12px;
  height: 11px;
}
.r-plus.first {
  height: 54px;
  padding: 0 0 24px 2px;
}
.r-plus.first svg:first-child {
  width: 9px;
}

/* blueprint window */
.win {
  position: relative;
  display: flex;
  flex-direction: column;
  padding: 5px 6px 6px 5px;
  border: 1px solid #5c5c5c;
  border-radius: 4px 4px 3px 3px;
  background: #1b1b1b;
}
.titlebar {
  flex: none;
  height: 38px;
  display: flex;
  align-items: end;
  background: linear-gradient(#525252, #222 80%, #1c1c1c);
}
.titlebar > .ue {
  width: 24px;
  height: 24px;
  align-self: start;
  margin: 3px 14px 0 0;
  color: #e4e4e4;
}
.doctabs {
  display: flex;
}
.doctab {
  width: 230px;
  height: 26px;
  padding: 0 22px 0 19px;
  display: flex;
  align-items: center;
  gap: 5px;
  background: linear-gradient(#636363, #454545);
  clip-path: polygon(0 100%, 5px 90%, 12px 15%, 16px 0, 209px 0, 214px 10%, 223px 90%, 230px 100%);
}
.doctab + .doctab {
  margin-left: -21px;
}
.doctab.active {
  background: linear-gradient(#8c8c8c, #6e6e6e);
}
.doc-ico {
  width: 20px;
  height: 20px;
  border-bottom: 1px solid;
}
.doc-name {
  flex: 1;
  text-align: left;
  overflow: hidden;
  white-space: nowrap;
}
.winbtns {
  margin-left: auto;
  align-self: start;
  display: flex;
  gap: 2px;
}
.winbtns button {
  width: 25px;
  height: 17px;
  background: linear-gradient(#666, #2e2e2e);
  border: 1px solid #888;
  border-top: 0;
  display: grid;
  place-items: center;
}
.winbtns .close {
  width: 46px;
}
.winbtns svg {
  width: 12px;
  height: 12px;
}
.tutorial {
  position: absolute;
  right: 94px;
  top: -10px;
  width: 68px;
  height: 68px;
}
.menubar {
  flex: none;
  height: 22px;
  border: solid #000;
  border-width: 1px 0;
  background: linear-gradient(#2a2a2a, #161616);
  display: flex;
  justify-content: space-between;
  align-items: center;
  padding: 2px 8px 0 10px;
}
.menubar nav {
  display: flex;
  gap: 22px;
}
.parent {
  color: #888;
}
.parent a {
  color: #8ab8ff;
  font-size: 16px;
  text-decoration: none;
  padding-left: 3px;
}
.physx {
  position: absolute;
  left: 178px;
  top: 29px;
  display: flex;
  font: 38px/38px "DejaVu Sans", sans-serif;
  color: rgba(215, 215, 215, 0.75);
  text-shadow: none;
}
.physx span {
  width: 40px;
}
.physx .plus-sign {
  width: 44px;
  font-size: 24px;
  padding-left: 8px;
}
.physx .green {
  color: rgba(16, 176, 16, 0.9);
}
.dock {
  flex: 1;
  min-height: 0;
  display: grid;
  grid-template-columns: 273px minmax(0, 1fr) 455px;
  grid-template-rows: minmax(0, 1fr);
  gap: 5px;
  padding-top: 1px;
  background: #222;
}
.pane,
.center {
  min-width: 0;
  display: flex;
  flex-direction: column;
}
.strip {
  height: 24px;
  padding-left: 4px;
}
.ptab {
  width: 166px;
  height: 24px;
  background: #3e3e3e;
  border-radius: 3px 3px 0 0;
  display: flex;
  align-items: center;
  gap: 8px;
  padding: 0 11px 0 6px;
}
.ptab .x {
  margin-left: auto;
}
.ico20 {
  width: 17px;
  height: 18px;
}
.panel {
  flex: 1;
  background: #3e3e3e;
}
.bp-tools {
  height: 42px;
  padding: 7px 0 0 6px;
  display: flex;
  gap: 2px;
}
.addnew {
  width: 90px;
  height: 27px;
  background: #4fa94f;
  border: 1px solid #3e8f3e;
  border-radius: 2px;
  display: flex;
  align-items: center;
  justify-content: center;
  gap: 3px;
}
.addnew svg {
  width: 12px;
  height: 12px;
}
.search {
  height: 20px;
  background: #cbcbcb;
  border-radius: 4px;
  display: flex;
  align-items: center;
  padding: 0 1px 0 6px;
}
.search input {
  flex: 1;
  min-width: 0;
  width: 0;
  border: 0;
  padding: 0;
  outline: 0;
  background: none;
  font: 13px/16px Roboto, sans-serif;
  color: #222;
}
.search input::placeholder {
  color: #8a8a8a;
  opacity: 1;
}
.search svg {
  width: 17px;
  height: 18px;
}
.bp-tools .search {
  width: 124px;
  margin-top: 3px;
}
.eye {
  display: flex;
  align-items: center;
  gap: 4px;
  height: 26px;
}
.eye svg {
  width: 20px;
  height: 13px;
}
.bp-tools .eye {
  margin-left: 3px;
}
.sect {
  height: 27px;
  margin: 0 3px 0 2px;
  padding: 0 3px 0 1px;
  background: #2e2e2e;
  border-radius: 3px;
  display: flex;
  align-items: center;
}
.sect b {
  font-size: 15px;
}
.sect small {
  font-size: 13px;
  color: #8c8c8c;
  text-shadow: none;
  padding-left: 5px;
}
.sect button {
  width: 22px;
  height: 20px;
  margin-left: auto;
  background: #424242;
  border-radius: 3px;
  display: grid;
  place-items: center;
}
.sect button svg {
  width: 12px;
  height: 12px;
}
.arrow {
  width: 8px;
  height: 8px;
  margin-right: 2px;
  background: #b8b8b8;
  clip-path: polygon(100% 0, 100% 100%, 0 100%);
}
.arrow.none {
  visibility: hidden;
}
.fns {
  height: 134px;
  margin-bottom: 2px;
  display: grid;
  grid-template-rows: repeat(6, 1fr);
  font-size: 15px;
  text-shadow: none;
}
.fns li {
  display: flex;
  align-items: center;
  padding-left: 18px;
}
.fns .fn {
  width: 16px;
}

/* toolbar */
.toolbar {
  flex: none;
  height: 69px;
  background: linear-gradient(135deg, #b08c20 9px, #3e3e3e 10px);
  display: flex;
  align-items: center;
}
.tool {
  height: 65px;
  display: flex;
  flex-direction: column;
  align-items: center;
  justify-content: space-between;
  padding: 3px 0 2px;
  white-space: nowrap;
}
.tool.on {
  background: #da820a;
}
.tico {
  width: 43px;
  height: 42px;
}
.w62 {
  width: 62px;
}
.w58 {
  width: 58px;
}
.w93 {
  width: 93px;
}
.w104 {
  width: 104px;
}
.w86 {
  width: 86px;
}
.drop {
  margin: 0 18px 0 10px;
  background: #bdbdbd;
}
.sep {
  width: 2px;
  height: 65px;
  background: #2d2d2d;
}
.tool + .sep {
  margin-left: 8px;
}
.sep + .tool {
  margin-left: 8px;
}
.debug {
  display: flex;
  flex-direction: column;
  align-items: center;
  gap: 2px;
  margin: 10px 0 0 -8px;
}
.selwrap {
  position: relative;
  width: 170px;
}
.selwrap .tri {
  position: absolute;
  right: 8px;
  top: 9px;
  background: #111;
}
select {
  width: 100%;
  height: 24px;
  appearance: none;
  border: 1px solid #eee;
  border-radius: 2px;
  background: #d8d8d8;
  padding: 0 5px;
  font: 13px/16px Roboto, sans-serif;
  color: #000;
}
.gtabs {
  flex: none;
  height: 29px;
  padding: 5px 0 0 4px;
  display: flex;
  background: #222;
}
.gtab {
  width: 167px;
  height: 24px;
  background: #2b2b2b;
  border-right: 1px solid #1a1a1a;
  display: flex;
  align-items: center;
  padding: 0 12px 0 11px;
}
.gtab .fn {
  width: 20px;
  text-align: left;
}
.gname {
  flex: 1;
  overflow: hidden;
  white-space: nowrap;
  text-align: left;
  margin-right: 6px;
}
.gtab.active {
  background: #3e3e3e;
  box-shadow: inset 0 1px 0 #b89a18;
}

/* graph canvas */
.graph {
  position: relative;
  flex: 1;
  min-height: 0;
  border: solid #3e3e3e;
  border-width: 3px 3px 2px 2px;
  background: #262626;
  overflow: hidden;
}
.grid,
.wires {
  position: absolute;
  inset: 0;
  width: 100%;
  height: 100%;
}
.watermark {
  position: absolute;
  right: 10px;
  bottom: 11px;
  font: bold 71px/80px "Roboto Condensed", "Liberation Sans Narrow", Roboto, sans-serif;
  color: rgba(255, 255, 255, 0.17);
  text-shadow: none;
}
.node {
  position: absolute;
  border-radius: 8px;
  background: linear-gradient(rgba(24, 28, 24, 0.92), rgba(13, 16, 13, 0.93) 60%);
  box-shadow: 0 0 0 1px #0a0a0a, 0 3px 6px rgba(0, 0, 0, 0.6);
  color: #e6e6e6;
  text-shadow: none;
}
.node header {
  height: 44px;
  margin: 0 1px;
  border-radius: 7px 7px 0 0;
  display: flex;
  padding: 4px 0 0 14px;
  background:
    radial-gradient(ellipse at 45% 45%, rgba(20, 38, 56, 0.8), transparent 65%),
    linear-gradient(90deg, #4a7ea2, #3f6c8c 60%, #28404e);
  border-top: 1px solid #6a9cba;
}
.node.entry header {
  height: 26px;
  padding: 3px 0 0 9px;
  background: linear-gradient(105deg, #8a1ca0, #6a1680 30%, #4c1a5a 65%, #3a3a3a 90%);
  border-top-color: #b058c0;
}
.node header svg {
  width: 18px;
  height: 17px;
  margin-right: 4px;
}
.node header .fn {
  width: 17px;
  color: #6cc0ff;
  text-shadow: none;
}
.node h3 {
  font: bold 15px/18px Roboto, sans-serif;
  text-shadow: 1px 1px 1px #111;
  white-space: nowrap;
}
.node header p {
  font: italic 13px/18px Roboto, sans-serif;
  color: #8e9e84;
  padding-top: 2px;
}
.exec {
  height: 35px;
  padding: 11px 12px 0 11px;
  display: flex;
}
.exec svg {
  width: 14px;
  height: 16px;
}
.exec .out {
  margin-left: auto;
}
.pin {
  height: 28px;
  display: flex;
  align-items: center;
  gap: 6px;
  padding-left: 12px;
}
.pin > svg,
.knot {
  width: 16px;
  height: 14px;
}
.entry .pin {
  flex-direction: row-reverse;
  padding: 0 14px 0 0;
}
.entry .pin {
  gap: 5px;
}
.pin.mid {
  height: 37px;
}
.pin.tall {
  height: 50px;
}
.pin label {
  display: flex;
  align-items: center;
  gap: 7px;
}
.pin label.stacked {
  flex-direction: column;
  align-items: start;
  gap: 2px;
}
.stacked input {
  margin-left: 8px;
}
.pin input {
  appearance: none;
  width: 18px;
  height: 18px;
  margin-top: 0;
  margin-bottom: 0;
  margin-right: 0;
  border: 2px solid #c2c2c2;
  border-radius: 3px;
  background: #6a6a6a;
}
.pin label:not(.stacked) input {
  margin-left: 0;
}
.pin input::before {
  content: "";
  display: block;
  height: 14px;
  background: #f4f4f4;
  clip-path: polygon(5% 50%, 22% 38%, 40% 58%, 82% 10%, 100% 24%, 42% 90%);
}
.knot {
  position: absolute;
}
.crumbs {
  position: absolute;
  inset: 0 0 auto 0;
  height: 46px;
  background: rgba(0, 0, 0, 0.58);
  display: flex;
  align-items: center;
  font-size: 21px;
  line-height: 44px;
  color: #8a8a8a;
  text-shadow: none;
  padding: 0 7px 0 7px;
}
.crumbs .star {
  width: 24px;
  height: 24px;
}
.vline {
  width: 1px;
  height: 38px;
  background: #888;
  margin: 0 12px 0 6px;
}
.arr {
  width: 20px;
  height: 26px;
}
.arr + .arr {
  margin: 0 12px 0 26px;
}
.fn.big {
  font-size: 30px;
  line-height: 30px;
  width: 41px;
  padding-left: 6px;
}
.crumbs .chev {
  width: 10px;
  height: 18px;
  margin: 0 11px 0 13px;
}
.crumbs b {
  margin-left: auto;
  font: bold 24px/36px "Roboto Condensed", "Liberation Sans Narrow", Roboto, sans-serif;
  align-self: start;
  color: #363636;
}

/* details */
.dt-tools {
  height: 34px;
  padding: 4px 0 0 5px;
  display: flex;
  align-items: start;
}
.dt-tools .search {
  flex: 1;
  margin: 2px 9px 0 0;
}
.matrix {
  width: 29px;
  height: 24px;
  background: linear-gradient(#e0e0e0, #a8a8a8);
  border: 1px solid #eee;
  border-radius: 2px;
  display: grid;
  place-items: center;
}
.matrix svg {
  width: 16px;
  height: 15px;
}
.dt-tools .eye {
  height: 24px;
  margin: 0 5px;
}
.dt-tools .eye svg {
  width: 18px;
}
.empty {
  text-align: center;
  padding-top: 22px;
}

/* screen sharing bar */
.share {
  position: absolute;
  left: 50%;
  bottom: 45px;
  margin-left: -222px;
  width: 443px;
  height: 46px;
  padding: 0 14px 0 11px;
  display: flex;
  align-items: center;
  background: rgba(250, 250, 250, 0.98);
  color: #222;
  text-shadow: none;
  font: 12px/16px "Open Sans", sans-serif;
}
.share span {
  flex: 1;
  padding-left: 11px;
}
.grip {
  width: 7px;
  height: 13px;
  border: solid #c0c0c0;
  border-width: 0 2px;
}
.share button {
  width: 112px;
  height: 36px;
  border-radius: 2px;
  background: #0078d4;
  color: #fff;
  font-weight: 600;
}
.share a {
  color: #0067b8;
  margin-left: 13px;
}

/* taskbar */
.taskbar {
  flex: none;
  height: 43px;
  display: flex;
  background: linear-gradient(90deg, #22373f 50%, #1f2f42 70%, #1b2942);
  color: #fff;
  text-shadow: none;
  font-family: "Open Sans", sans-serif;
}
.start {
  width: 53px;
  display: grid;
  place-items: center;
}
.start svg {
  width: 16px;
  height: 16px;
}
.tsearch {
  width: 380px;
  background: #f2f2f2;
  border: 1px solid #bbb;
  display: flex;
  align-items: center;
  gap: 14px;
  padding-left: 13px;
}
.tsearch svg {
  width: 20px;
  height: 20px;
}
.tsearch input {
  border: 0;
  padding: 0;
  outline: 0;
  background: none;
  font: 16px/22px "Open Sans", sans-serif;
}
.tsearch input::placeholder {
  color: #2f2f2f;
  opacity: 1;
}
.task {
  position: relative;
  width: 54px;
  display: grid;
  place-items: center;
}
.task svg {
  width: 27px;
  height: 27px;
}
.task.open::after {
  content: "";
  position: absolute;
  left: 5px;
  right: 4px;
  bottom: 0;
  height: 2px;
  background: #76b9ed;
}
.task.current {
  background: linear-gradient(90deg, transparent 2px, #4e5f68 2px, #4e5f68 51px, #3c4e58 51px);
}
.count {
  position: absolute;
  left: 28px;
  top: 22px;
  width: 14px;
  height: 14px;
  border-radius: 7px;
  background: #f04747;
  font-size: 11px;
  line-height: 14px;
}
.tray {
  margin-left: auto;
  display: flex;
  align-items: center;
  font-size: 12px;
}
.up {
  width: 12px;
  height: 8px;
  margin-right: 8px;
}
.net {
  width: 17px;
  height: 15px;
}
.two {
  display: flex;
  flex-direction: column;
  align-items: center;
  line-height: 19px;
}
.lang {
  width: 28px;
  margin-left: 30px;
}
.clock {
  width: 60px;
  margin: 0 21px 0 12px;
}
.notif {
  position: relative;
  width: 16px;
}
.notif svg {
  width: 16px;
  height: 16px;
}
.notif span {
  position: absolute;
  left: 7px;
  top: 6px;
  width: 18px;
  height: 18px;
  border: 1px solid #999;
  border-radius: 9px;
  background: #333a46;
  text-align: center;
  line-height: 16px;
}
.peek {
  width: 1px;
  height: 43px;
  background: #7a8496;
  margin: 0 5px 0 23px;
}
</style>
